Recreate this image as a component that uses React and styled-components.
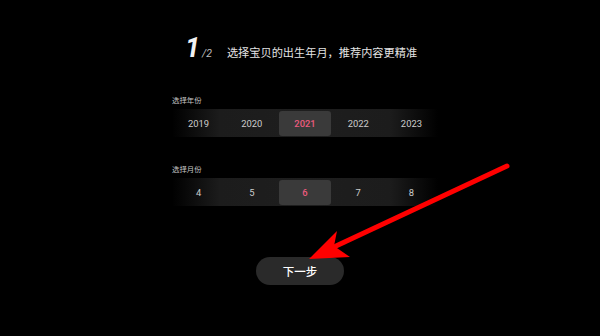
import React, { useState } from 'react';
import styled, { createGlobalStyle } from 'styled-components';

const GlobalStyle = createGlobalStyle`
  html, body {
    margin: 0;
    padding: 0;
    background: #000000;
  }
  body {
    font-family: Roboto, "Noto Sans CJK SC", sans-serif;
  }
`;

const Page = styled.div`
  position: relative;
  width: 600px;
  height: 336px;
  background: #000000;
  display: flex;
  flex-direction: column;
  align-items: center;
  overflow: hidden;
`;

const TitleRow = styled.div`
  margin-top: 34px;
  height: 28px;
  display: flex;
  align-items: baseline;
  line-height: 28px;
  margin-left: 2px;
`;

const Step = styled.span`
  font-family: Roboto, sans-serif;
  font-size: 27px;
  font-style: italic;
  font-weight: 700;
  color: #f2f2f2;
`;

const StepTotal = styled.span`
  font-size: 10.5px;
  font-style: italic;
  color: #bdbdbd;
  margin-left: 2px;
`;

const Subtitle = styled.span`
  font-family: "Noto Sans CJK SC", sans-serif;
  font-size: 11.2px;
  color: #e4e4e4;
  margin-left: 15px;
`;

const Section = styled.div`
  width: 266px;
  margin-left: 10px;
  margin-top: ${p => p.top}px;
  display: flex;
  flex-direction: column;
`;

const Label = styled.div`
  font-family: "Noto Sans CJK SC", sans-serif;
  font-size: 7.4px;
  line-height: 10px;
  height: 10px;
  color: #c4c4c4;
`;

const Strip = styled.div`
  margin-top: 4px;
  height: 28px;
  display: grid;
  grid-template-columns: repeat(5, 1fr);
  align-items: center;
  background: linear-gradient(90deg, rgba(30,30,30,0) 0%, #1c1c1c 18%, #1e1e1e 50%, #1c1c1c 82%, rgba(30,30,30,0) 100%);
`;

const Cell = styled.div`
  height: 25px;
  margin: 0 1px;
  display: flex;
  align-items: center;
  justify-content: center;
  border-radius: 3px;
  font-size: 9.4px;
  font-weight: ${p => (p.active ? 500 : 400)};
  color: ${p => (p.active ? '#ec5b7e' : '#cdcdcd')};
  background: ${p => (p.active ? '#3a3a3a' : 'transparent')};
  cursor: pointer;
`;

const NextButton = styled.button`
  margin-top: 51px;
  width: 88px;
  height: 28px;
  border: none;
  border-radius: 14px;
  background: #2a2a2a;
  color: #ffffff;
  font-family: "Noto Sans CJK SC", sans-serif;
  font-size: 11.5px;
  font-weight: 500;
  cursor: pointer;
`;

const Overlay = styled.svg`
  position: absolute;
  left: 0;
  top: 0;
  pointer-events: none;
`;

const Picker = ({ label, items, value, onPick, top }) => (
  <Section top={top}>
    <Label>{label}</Label>
    <Strip>
      {items.map(item => (
        <Cell key={item} active={item === value} onClick={() => onPick(item)}>
          {item}
        </Cell>
      ))}
    </Strip>
  </Section>
);

const App = () => {
  const [year, setYear] = useState(2021);
  const [month, setMonth] = useState(6);

  return (
    <Page>
      <GlobalStyle />
      <TitleRow>
        <Step>1</Step>
        <StepTotal>/2</StepTotal>
        <Subtitle>选择宝贝的出生年月，推荐内容更精准</Subtitle>
      </TitleRow>
      <Picker label="选择年份" items={[2019, 2020, 2021, 2022, 2023]} value={year} onPick={setYear} top={33} />
      <Picker label="选择月份" items={[4, 5, 6, 7, 8]} value={month} onPick={setMonth} top={27} />
      <NextButton>下一步</NextButton>
      <Overlay width="600" height="336" viewBox="0 0 600 336">
        <line x1="507" y1="166" x2="336" y2="246" stroke="#ff0000" strokeWidth="5" strokeLinecap="round" />
        <polygon points="309,259 337,231 334,246 350,257" fill="#ff0000" />
      </Overlay>
    </Page>
  );
};

export default App;
